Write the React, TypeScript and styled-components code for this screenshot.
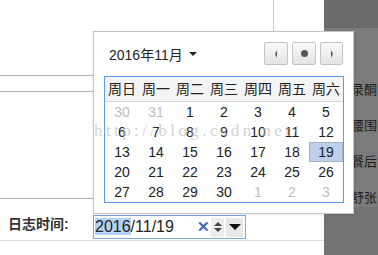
import React from "react";
import styled, { createGlobalStyle } from "styled-components";

const GlobalStyle = createGlobalStyle`
  html, body {
    margin: 0;
    padding: 0;
    background: #fff;
  }
  body {
    width: 378px;
    height: 255px;
    overflow: hidden;
    font-family: "Liberation Sans", "Noto Sans CJK SC", sans-serif;
    color: #222;
  }
`;

const Page = styled.div`
  position: relative;
  display: flex;
  width: 378px;
  height: 255px;
  overflow: hidden;
`;

const Main = styled.div`
  width: 324px;
  display: flex;
  flex-direction: column;
`;

const TopArea = styled.div`
  height: 75px;
  display: flex;
`;

const TopCell = styled.div`
  width: 273px;
  border-right: 1px solid #c8c8c8;
`;

const Band = styled.div`
  height: 15px;
  border-top: 1px solid #b0b0b0;
  border-bottom: 1px solid #b0b0b0;
`;

const Body = styled.div`
  height: 106px;
  border-bottom: 1px solid #b0b0b0;
`;

const FormRow = styled.div`
  height: 25px;
  padding: 16px 0 0 8px;
  display: flex;
  align-items: flex-start;
  border-bottom: 1px solid #dcdcdc;
`;

const Label = styled.label`
  width: 85px;
  font-size: 14px;
  font-weight: bold;
  line-height: 18px;
  color: #333;
`;

const DateInput = styled.div`
  width: 150px;
  height: 22px;
  border: 1px solid #7ba7e1;
  display: flex;
  align-items: center;
  padding-left: 1px;
  box-sizing: content-box;
`;

const DateText = styled.span`
  font-size: 16px;
  line-height: 18px;
  color: #222;
`;

const Selected = styled.span`
  background: #b3d2f6;
`;

const Controls = styled.div`
  margin-left: auto;
  display: flex;
  align-items: center;
  height: 19px;
`;

const Clear = styled.span`
  font-size: 15px;
  font-weight: bold;
  color: #3b6db5;
  width: 12px;
  text-align: center;
  margin-right: 2px;
`;

const Spinner = styled.div`
  width: 13px;
  height: 19px;
  background: #ececec;
  display: flex;
  flex-direction: column;
  align-items: center;
  justify-content: center;
  gap: 2px;
`;

const Arrow = styled.span<{ $dir: "up" | "down" | "left" | "right"; $size: number; $color?: string }>`
  width: 0;
  height: 0;
  border-style: solid;
  border-color: transparent;
  ${({ $dir, $size, $color = "#444" }) =>
    $dir === "up"
      ? `border-width: 0 ${$size}px ${$size}px; border-bottom-color: ${$color};`
      : $dir === "down"
      ? `border-width: ${$size}px ${$size}px 0; border-top-color: ${$color};`
      : $dir === "left"
      ? `border-width: ${$size}px ${$size * 0.7}px ${$size}px 0; border-right-color: ${$color};`
      : `border-width: ${$size}px 0 ${$size}px ${$size * 0.7}px; border-left-color: ${$color};`}
`;

const DropButton = styled.div`
  width: 17px;
  height: 19px;
  margin-left: 2px;
  margin-right: 2px;
  background: #e8e8e8;
  display: flex;
  align-items: center;
  justify-content: center;
`;

const SidePanel = styled.div`
  width: 54px;
  background: #737373;
  display: flex;
  flex-direction: column;
`;

const SideHead = styled.div`
  height: 28px;
  background: #6b6b6b;
`;

const SideList = styled.div`
  height: 179px;
  padding-top: 44px;
  box-sizing: border-box;
  background: #7b7b7b;
  display: flex;
  flex-direction: column;
`;

const SideItem = styled.div`
  height: 36px;
  line-height: 36px;
  font-size: 13px;
  color: #1e1e1e;
  text-align: right;
  white-space: nowrap;
  padding-right: 1px;
  direction: rtl;
`;

const Popup = styled.div`
  position: absolute;
  left: 93px;
  top: 31px;
  width: 259px;
  height: 180px;
  background: #fff;
  border: 1px solid #c4c4c4;
  box-shadow: 0 1px 3px rgba(0, 0, 0, 0.08);
  padding: 10px 10px 0;
  box-sizing: content-box;
  width: 239px;
  height: 171px;
`;

const Header = styled.div`
  display: flex;
  align-items: center;
  height: 23px;
  margin-bottom: 11px;
`;

const Title = styled.div`
  padding-left: 5px;
  font-size: 14px;
  display: flex;
  align-items: center;
  gap: 6px;
  color: #222;
`;

const NavGroup = styled.div`
  margin-left: auto;
  display: flex;
  gap: 4px;
`;

const NavButton = styled.div<{ $w?: number }>`
  width: ${({ $w = 24 }) => $w}px;
  height: 23px;
  box-sizing: border-box;
  border: 1px solid #c3c3c3;
  border-radius: 2px;
  background: linear-gradient(#f9f9f9, #e3e3e3);
  display: flex;
  align-items: center;
  justify-content: center;
`;

const Dot = styled.span`
  width: 7px;
  height: 7px;
  border-radius: 50%;
  background: #555;
`;

const Grid = styled.div`
  display: grid;
  grid-template-columns: repeat(7, 34px);
  border: 1px solid #5b9cf2;
  width: 240px;
  box-sizing: border-box;
`;

const HeadCell = styled.div`
  height: 24px;
  line-height: 24px;
  background: #f4f4f4;
  border-bottom: 1px solid #d6d6d6;
  text-align: center;
  font-size: 14px;
  color: #222;
`;

const DayCell = styled.div<{ $muted?: boolean; $active?: boolean }>`
  height: 20px;
  line-height: 20px;
  text-align: center;
  font-size: 14px;
  color: ${({ $muted }) => ($muted ? "#bdbdbd" : "#222")};
  background: ${({ $active }) => ($active ? "#bccfeb" : "transparent")};
  box-shadow: ${({ $active }) => ($active ? "inset 0 0 0 1px #a3b2c8" : "none")};
`;

const Watermark = styled.div`
  position: absolute;
  left: 94px;
  top: 122px;
  font-family: "Liberation Serif", serif;
  font-size: 17px;
  line-height: 17px;
  letter-spacing: 3.4px;
  color: rgba(180, 180, 180, 0.6);
  pointer-events: none;
  white-space: nowrap;
`;

const weekdays = ["周日", "周一", "周二", "周三", "周四", "周五", "周六"];

const days: { d: number; muted?: boolean }[] = [
  { d: 30, muted: true },
  { d: 31, muted: true },
  ...Array.from({ length: 30 }, (_, i) => ({ d: i + 1 })),
  { d: 1, muted: true },
  { d: 2, muted: true },
  { d: 3, muted: true },
];

const sideItems = ["记录酮", "腰围", "餐后", "舒张"];

export default function App() {
  return (
    <>
      <GlobalStyle />
      <Page>
        <Main>
          <TopArea>
            <TopCell />
          </TopArea>
          <Band />
          <Body />
          <FormRow>
            <Label>日志时间:</Label>
            <DateInput>
              <DateText>
                <Selected>2016</Selected>/11/19
              </DateText>
              <Controls>
                <Clear>✕</Clear>
                <Spinner>
                  <Arrow $dir="up" $size={4} />
                  <Arrow $dir="down" $size={4} />
                </Spinner>
                <DropButton>
                  <Arrow $dir="down" $size={6} $color="#111" />
                </DropButton>
              </Controls>
            </DateInput>
          </FormRow>
        </Main>
        <SidePanel>
          <SideHead />
          <SideList>
            {sideItems.map((s) => (
              <SideItem key={s}>{s}</SideItem>
            ))}
          </SideList>
        </SidePanel>

        <Popup>
          <Header>
            <Title>
              2016年11月
              <Arrow $dir="down" $size={4} $color="#222" />
            </Title>
            <NavGroup>
              <NavButton>
                <Arrow $dir="left" $size={4} $color="#555" />
              </NavButton>
              <NavButton>
                <Dot />
              </NavButton>
              <NavButton $w={23}>
                <Arrow $dir="right" $size={4} $color="#555" />
              </NavButton>
            </NavGroup>
          </Header>
          <Grid>
            {weekdays.map((w) => (
              <HeadCell key={w}>{w}</HeadCell>
            ))}
            {days.map((x, i) => (
              <DayCell key={i} $muted={x.muted} $active={!x.muted && x.d === 19}>
                {x.d}
              </DayCell>
            ))}
          </Grid>
        </Popup>
        <Watermark>http://blog.csdn.net/</Watermark>
      </Page>
    </>
  );
}
